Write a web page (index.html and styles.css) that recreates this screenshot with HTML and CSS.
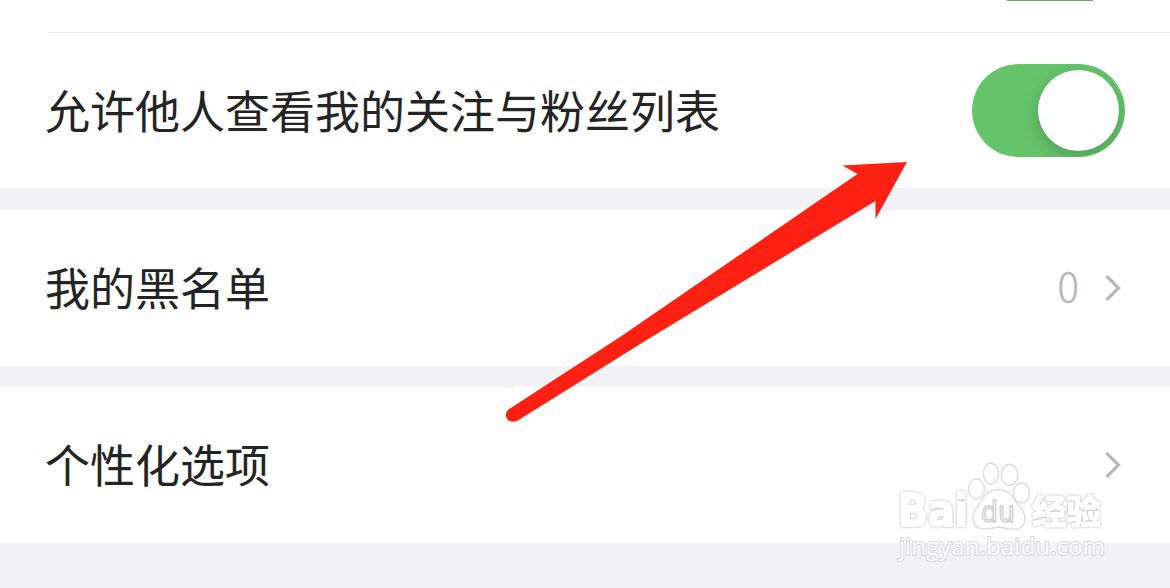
FILE: index.html
```
<!DOCTYPE html>
<html lang="zh-CN">
<head>
    <meta charset="UTF-8">
    <meta name="viewport" content="width=device-width, initial-scale=1.0">
    <title>隐私设置</title>
    <link rel="stylesheet" href="styles.css">
</head>
<body>

    <div class="settings">
        <div class="group">
            <div class="row-previous">
                <span class="switch-edge"></span>
            </div>
            <div class="row row-follow">
                <span class="label">允许他人查看我的关注与粉丝列表</span>
                <span class="switch"><span class="knob"></span></span>
            </div>
        </div>

        <div class="group">
            <div class="row">
                <span class="label label-link">我的黑名单</span>
                <span class="value">0</span>
                <svg class="chevron" viewBox="0 0 18 30">
                    <path d="M2.5 3 L14.5 15 L2.5 27"/>
                </svg>
            </div>
        </div>

        <div class="group">
            <div class="row">
                <span class="label label-link">个性化选项</span>
                <svg class="chevron" viewBox="0 0 18 30">
                    <path d="M2.5 3 L14.5 15 L2.5 27"/>
                </svg>
            </div>
        </div>
    </div>

    <svg class="arrow" viewBox="0 0 420 280">
        <path d="M10 268.500 Q5.500 271 6 276 Q8 284 17 281 L145 201 L375.500 61 L375.500 79 L407 22 L342.500 25.500 L357.500 34 L120 197 Z"/>
    </svg>

    <svg class="watermark" viewBox="0 0 230 115">
        <g class="mark">
            <text class="brand" x="8" y="70" textLength="70" lengthAdjust="spacingAndGlyphs">Bai</text>
            <ellipse cx="86.500" cy="33" rx="8" ry="10"/>
            <ellipse cx="101" cy="17.500" rx="7.700" ry="10.500"/>
            <ellipse cx="119.500" cy="19" rx="8.300" ry="10.500"/>
            <ellipse cx="131.500" cy="37" rx="8" ry="10"/>
            <path d="M93 42 C99 31 117 31 123 42 C128 50 135 54 135 63 C134 76 124 74 109 71 C95 74 85 75 83 64 C82 55 89 50 93 42 Z"/>
            <text class="du" x="91" y="66" textLength="34" lengthAdjust="spacingAndGlyphs">du</text>
            <text class="cn" x="142" y="68" textLength="69" lengthAdjust="spacingAndGlyphs">经验</text>
            <text class="site" x="9" y="99" textLength="206" lengthAdjust="spacingAndGlyphs">jingyan.baidu.com</text>
        </g>
    </svg>

</body>
</html>
```
FILE: styles.css
```
* {
    box-sizing: border-box;
    margin: 0;
    padding: 0;
}
body {
    position: relative;
    height: 588px;
    overflow: hidden;
    font-family: "Noto Sans CJK SC", sans-serif;
    background-color: #f2f1f6;
}
.settings {
    display: flex;
    flex-direction: column;
    gap: 21px;
}
.group {
    background: #fefefe;
}
.group:first-child {
    margin-bottom: 1px;
}
.row {
    display: flex;
    align-items: center;
    height: 156px;
    padding: 0 48px 0 45px;
}
.row-previous {
    display: flex;
    justify-content: flex-end;
    align-items: flex-start;
    height: 32px;
    padding-right: 77px;
    overflow: hidden;
}
.switch-edge {
    width: 86px;
    height: 1px;
    background: #65ac69;
}
.row-follow {
    position: relative;
    padding-right: 45px;
}
.row-follow::before {
    content: "";
    position: absolute;
    top: 0;
    left: 48px;
    right: 0;
    height: 1px;
    background: #eeeeee;
}
.label {
    flex: 1;
    font-size: 45px;
    line-height: 66px;
    color: #242424;
    white-space: nowrap;
}
.label-link {
    padding-bottom: 2px;
}
.value {
    margin-right: 25px;
    padding-bottom: 6px;
    font-size: 40px;
    font-weight: 300;
    color: #b8b8b8;
    -webkit-text-stroke: 0.5px #b8b8b8;
}
.chevron {
    width: 18px;
    height: 30px;
    fill: none;
    stroke: #b9b9b9;
    stroke-width: 3.2;
}
.switch {
    width: 153px;
    height: 93px;
    padding: 6px;
    border-radius: 47px;
    background: #65c46a;
    display: flex;
    justify-content: flex-end;
    overflow: hidden;
}
.knob {
    width: 81px;
    height: 81px;
    border-radius: 50%;
    background: #fefefe;
    box-shadow: 0 6px 18px rgba(0, 0, 0, 0.2);
}
.arrow {
    position: absolute;
    top: 140px;
    left: 500px;
    width: 420px;
    height: 280px;
    overflow: visible;
    fill: #fe2012;
}
.watermark {
    position: absolute;
    top: 456px;
    left: 890px;
    width: 230px;
    height: 115px;
}
.mark {
    fill: #ffffff;
    stroke: #dcdcdc;
    stroke-width: 1.4;
}
.brand {
    font: bold 44px "DejaVu Sans", sans-serif;
    stroke: #ffffff;
    stroke-width: 2;
    filter: drop-shadow(0 0 0.9px #a8a8a8);
}
.du {
    font: 28px "DejaVu Sans", sans-serif;
    fill: #f8f8f8;
    stroke: #cfcfcf;
}
.cn {
    font: 900 34px "Noto Sans CJK SC", sans-serif;
    stroke: #ffffff;
    stroke-width: 1;
    filter: drop-shadow(0 0 0.9px #a8a8a8);
}
.site {
    font: 23px "Open Sans", sans-serif;
    fill: #fafafa;
    stroke: #dadadc;
    stroke-width: 2;
    paint-order: stroke;
}
```
